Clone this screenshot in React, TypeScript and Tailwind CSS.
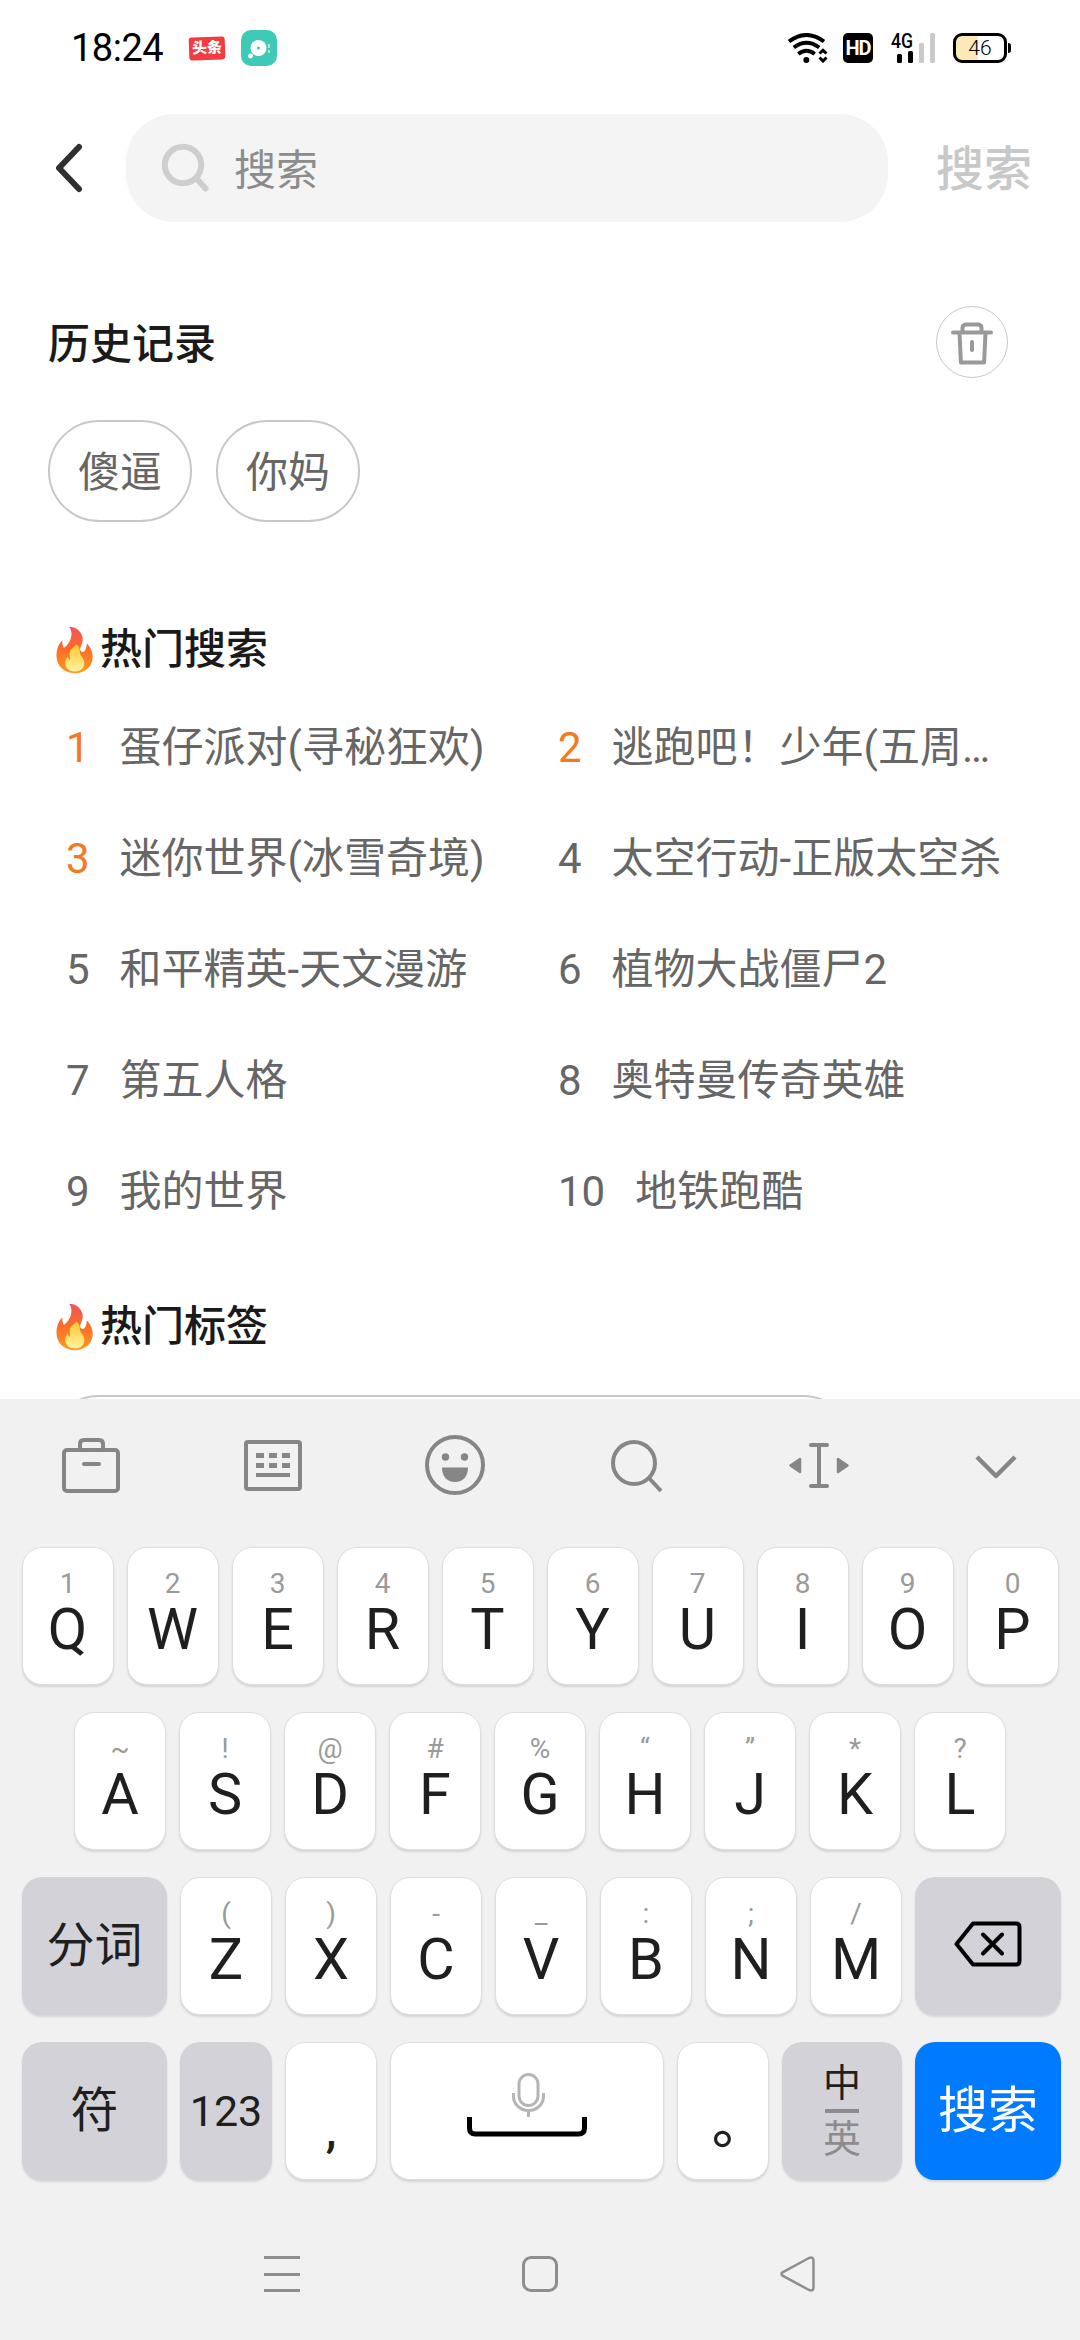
import type { ReactNode } from "react";
import clsx from "clsx";

const history = ["傻逼", "你妈"];

const hotSearches = [
  "蛋仔派对(寻秘狂欢)",
  "逃跑吧！少年(五周…",
  "迷你世界(冰雪奇境)",
  "太空行动-正版太空杀",
  "和平精英-天文漫游",
  "植物大战僵尸2",
  "第五人格",
  "奥特曼传奇英雄",
  "我的世界",
  "地铁跑酷",
];

const topRow = [
  ["1", "Q"],
  ["2", "W"],
  ["3", "E"],
  ["4", "R"],
  ["5", "T"],
  ["6", "Y"],
  ["7", "U"],
  ["8", "I"],
  ["9", "O"],
  ["0", "P"],
];

const middleRow = [
  ["~", "A"],
  ["!", "S"],
  ["@", "D"],
  ["#", "F"],
  ["%", "G"],
  ["“", "H"],
  ["”", "J"],
  ["*", "K"],
  ["?", "L"],
];

const bottomRow = [
  ["(", "Z"],
  [")", "X"],
  ["-", "C"],
  ["_", "V"],
  [":", "B"],
  [";", "N"],
  ["/", "M"],
];

const StatusBar = () => (
  <div className="flex h-24 items-center pl-[71px] pr-[69px] text-black">
    <span className="w-[118px] text-[38px] leading-[38px] tracking-[-0.5px]">18:24</span>
    <div className="flex h-9 w-9 items-center justify-center">
      <span className="flex h-[23px] w-9 -rotate-2 items-center justify-center rounded-[3px] bg-[#f43b3f] text-[15px] font-black leading-none text-white">
        头条
      </span>
    </div>
    <svg className="ml-4" width="36" height="36" viewBox="0 0 36 36">
      <rect width="36" height="36" rx="10" fill="#3fcab7" />
      <circle cx="17.5" cy="18" r="8" fill="#fff" />
      <circle cx="17.5" cy="18" r="1.6" fill="#3fcab7" />
      <circle cx="9.5" cy="26" r="2.4" fill="#fff" />
      <path d="M28 14v4M28 20v3" stroke="#a9e8df" strokeWidth="2" />
    </svg>

    <div className="ml-auto flex items-center">
      <svg width="40" height="30" viewBox="0 0 40 30" fill="none" stroke="#000">
        <path d="M1 8.5Q18.500 -4.500 36 8.500" strokeWidth="4" />
        <path d="M5.800 14.500Q18.500 5 31.200 14.500" strokeWidth="4" />
        <path d="M10.300 21Q18.500 14.500 26.700 21" strokeWidth="4" />
        <circle cx="18.300" cy="27" r="3" fill="#000" stroke="none" />
        <path d="M31.500 20.500 35 17.300l3.500 3.200M31.500 24.500l3.500 3.500 3.500-3.500" strokeWidth="3" />
      </svg>
      <span className="ml-[15px] flex h-[30px] w-[30px] items-center justify-center rounded-[5px] bg-black text-[20px] font-bold leading-none tracking-[-1px] text-white">
        HD
      </span>
      <svg className="mb-2 ml-[18px]" width="44" height="38" viewBox="0 -8 44 38">
        <text x="0" y="15" fontSize="20" fontWeight="500" textLength="22" lengthAdjust="spacingAndGlyphs">
          4G
        </text>
        <rect x="6" y="21" width="5" height="9" rx="1.500" />
        <rect x="17" y="18" width="5" height="12" rx="1.500" />
        <rect x="28" y="10" width="5" height="20" rx="1.500" fill="#cacaca" />
        <rect x="39" y="0" width="5" height="30" rx="1.500" fill="#cacaca" />
      </svg>
      <div className="ml-[18px] flex items-center gap-px">
        <div className="flex h-[30px] w-[54px] items-center justify-center rounded-[9px] border-[3px] border-black bg-linear-to-r from-[#fce9b6] from-45% to-white to-45% text-[21px] font-light leading-none">
          46
        </div>
        <div className="h-[10px] w-[3px] rounded-r-sm bg-black" />
      </div>
    </div>
  </div>
);

const SearchHeader = () => (
  <div className="flex h-36 items-center">
    <svg className="ml-[53px]" width="32" height="54" viewBox="0 0 32 54" fill="none" stroke="#303030" strokeWidth="6" strokeLinecap="round" strokeLinejoin="round">
      <path d="M26 6 6 27l20 21" />
    </svg>
    <div className="ml-[41px] flex h-[108px] w-[762px] items-center rounded-[48px] bg-[#f4f4f4] pl-[35px]">
      <svg width="50" height="50" viewBox="0 0 50 50" fill="none" stroke="#cecece" strokeWidth="6" strokeLinecap="round">
        <circle cx="22" cy="22" r="18.200" />
        <path d="m35.500 35.500 9 10" />
      </svg>
      <span className="ml-[23px] mt-[5px] text-[42px] leading-[60px] text-[#8c8c8c]">搜索</span>
    </div>
    <button className="ml-12 mt-[3px] text-[48px] font-medium leading-[60px] text-[#c8c8c8]">搜索</button>
  </div>
);

const TrashIcon = () => (
  <svg width="46" height="46" viewBox="0 0 46 46" fill="none" stroke="#999" strokeWidth="4" strokeLinecap="round" strokeLinejoin="round">
    <path d="M4 13.500h38M10.500 13.500l1.400 30h23.200l1.400-30" />
    <path d="M13.500 13V9q0-3 3-3.500h13q3 .5 3 3.500V13" />
    <path d="M23 23v8" />
  </svg>
);

const FireIcon = () => (
  <svg width="38" height="48" viewBox="0 0 38 48">
    <defs>
      <linearGradient id="flame" x1="0" y1="0" x2="0" y2="1">
        <stop offset="0" stopColor="#f2545b" />
        <stop offset=".45" stopColor="#fb6a2a" />
        <stop offset="1" stopColor="#ff9a1c" />
      </linearGradient>
      <linearGradient id="core" x1="0" y1="0" x2="0" y2="1">
        <stop offset="0" stopColor="#ffc62e" />
        <stop offset="1" stopColor="#fff3a0" />
      </linearGradient>
    </defs>
    <path
      d="M13 .8c7 0 12.500 4.500 13.600 11 .6 4-1.300 7.400-2.400 10.500-.5 2 .8 4 2.800 3.600 3-.6 3.500-5 3.800-8.400 3.400 3 5.900 8.500 5.900 13.500 0 9.500-7.700 16.200-18 16.200C8 47.200.5 40 .5 29.800.5 23.700 2.500 18 6.300 14.500c0 2.500.2 5.500 1.500 7.500 4.500-3 8.200-9 7.600-15.500C15.200 4 14 2 13 .8Z"
      fill="url(#flame)"
    />
    <path
      d="M20.200 18.500c3.800 1.500 3.300 5.700 3.800 8.500.8 3.500 4.300 5.500 4.300 10.200 0 5-4 8.300-9.400 8.300S9.300 42 9.300 37c0-3 1.200-5 2.300-7 .3 1.800 1 3.200 2.600 4 .3-3-1.200-4.500-.4-8 .8-3.400 4.400-4.500 6.400-7.500Z"
      fill="url(#core)"
    />
  </svg>
);

const HotTitle = ({ children }: { children: ReactNode }) => (
  <div className="flex h-[60px] items-center pl-[56px] text-[42px] font-medium leading-[60px] text-[#1a1a1a]">
    <FireIcon />
    <h2 className="ml-[6px]">{children}</h2>
  </div>
);

const Key = ({ hint, label }: { hint: string; label: string }) => (
  <div className="flex h-[138px] w-[92px] flex-col items-center rounded-[20px] border border-[#dedede] bg-white pt-[17px] shadow-[0_2px_2px_#d6d6d6]">
    <span className="h-[37px] text-[28px] leading-[37px] text-[#9a9a9a]">{hint}</span>
    <span className="text-[57.500px] leading-[56px] text-[#1f1f1f]">{label}</span>
  </div>
);

const ActionKey = ({ className, children }: { className?: string; children: ReactNode }) => (
  <div
    className={clsx(
      "flex h-[138px] flex-col items-center rounded-[20px] shadow-[0_2px_2px_#d6d6d6]",
      className
    )}
  >
    {children}
  </div>
);

const KeyboardToolbar = () => (
  <div className="grid h-[132px] grid-cols-[repeat(5,182px)_172px] items-center justify-items-center text-[#868686]">
    <svg width="60" height="60" viewBox="0 0 60 60" fill="none" stroke="currentColor" strokeWidth="4" strokeLinecap="round">
      <rect x="3" y="15" width="54" height="41" rx="3" />
      <path d="M19 15V9q0-4 4-4h15q4 0 4 4v6M23 29h15" />
    </svg>
    <svg width="60" height="60" viewBox="0 0 60 60" fill="none" stroke="currentColor" strokeWidth="4">
      <rect x="3" y="7" width="54" height="47" rx="2" />
      <path d="M13 20.500h34M13 30.500h34" strokeWidth="5" strokeDasharray="8 5" />
      <path d="M13 40h34" />
    </svg>
    <svg width="60" height="60" viewBox="0 0 60 60" fill="currentColor">
      <circle cx="30" cy="30" r="28" fill="none" stroke="currentColor" strokeWidth="4" />
      <circle cx="20.500" cy="22" r="3.700" />
      <circle cx="39.500" cy="22" r="3.700" />
      <path d="M17 32.500h26c0 9-5 14.500-13 14.500s-13-5.500-13-14.500Z" />
    </svg>
    <svg width="60" height="60" viewBox="0 0 60 60" fill="none" stroke="currentColor" strokeWidth="4">
      <circle cx="27" cy="28" r="21" />
      <path d="M42 43l12 13" />
    </svg>
    <svg width="60" height="60" viewBox="0 0 60 60" fill="currentColor" stroke="currentColor" strokeLinejoin="round" strokeLinecap="round">
      <path d="M30 10v40M22 10h16M22 51h16" strokeWidth="4" fill="none" />
      <path d="M1.500 30.500 11 24v13ZM58.500 30.500 49 24v13Z" strokeWidth="2.500" />
    </svg>
    <svg width="44" height="60" viewBox="0 0 44 60" fill="none" stroke="currentColor" strokeWidth="4.500">
      <path d="m3 22 19 19 19-19" strokeLinejoin="round" />
    </svg>
  </div>
);

const Keyboard = () => (
  <div className="h-[941px] bg-[#f1f1f1]">
    <KeyboardToolbar />
    <div className="flex flex-col gap-[27px] pt-4">
      <div className="flex justify-center gap-[13px]">
        {topRow.map(([hint, label]) => (
          <Key key={label} hint={hint} label={label} />
        ))}
      </div>
      <div className="flex justify-center gap-[13px]">
        {middleRow.map(([hint, label]) => (
          <Key key={label} hint={hint} label={label} />
        ))}
      </div>
      <div className="flex gap-[13px] pl-[22px]">
        <ActionKey className="w-[145px] justify-center bg-[#d3d2d8] text-[48px] leading-[60px] text-[#1f1f1f]">分词</ActionKey>
        {bottomRow.map(([hint, label]) => (
          <Key key={label} hint={hint} label={label} />
        ))}
        <ActionKey className="w-[146px] justify-center bg-[#d3d2d8]">
          <svg className="mb-1" width="68" height="46" viewBox="0 0 68 46" fill="none" stroke="#000" strokeWidth="4" strokeLinejoin="round" strokeLinecap="round">
            <path d="M19 2.500h43q3.500 0 3.500 3.500v34q0 3.500-3.500 3.500H19L2.500 23Z" />
            <path d="m29 13.500 19 19M48 13.500l-19 19" />
          </svg>
        </ActionKey>
      </div>
      <div className="flex gap-[13px] pl-[22px] text-[#1f1f1f]">
        <ActionKey className="w-[145px] justify-center bg-[#d3d2d8] text-[48px] leading-[60px]">符</ActionKey>
        <ActionKey className="w-[92px] justify-center bg-[#d3d2d8] text-[43px] leading-[60px]">123</ActionKey>
        <ActionKey className="w-[92px] border border-[#dedede] bg-white pt-[57px] text-[48px] font-medium leading-[60px]">,</ActionKey>
        <ActionKey className="w-[274px] border border-[#dedede] bg-white pt-[28px]">
          <svg width="122" height="66" viewBox="0 0 122 66" fill="none">
            <g stroke="#b5b5b5" strokeWidth="3">
              <rect x="53" y="3.500" width="19" height="31" rx="9.500" />
              <path d="M47.500 22v3.500a15 14 0 0 0 30 0V22M62.500 40v6" />
            </g>
            <path d="M3.500 46v11q0 6 6 6h103q6 0 6-6V46" stroke="#000" strokeWidth="5" />
          </svg>
        </ActionKey>
        <ActionKey className="w-[92px] border border-[#dedede] bg-white pt-[53px] pl-[32px] text-[54px] font-medium leading-[60px]">。</ActionKey>
        <ActionKey className="w-[120px] justify-center bg-[#d3d2d8] text-[38px] leading-[46px]">
          <span className="h-[46px]">中</span>
          <span className="my-[3px] h-1 w-[34px] bg-[#8c8c8f]" />
          <span className="h-[46px] text-[#8c8c8f]">英</span>
        </ActionKey>
        <ActionKey className="w-[146px] justify-center bg-[#007aff] text-[50px] leading-[60px] text-white">搜索</ActionKey>
      </div>
    </div>
    <NavigationBar />
  </div>
);

const NavigationBar = () => (
  <div className="mt-[76px] flex h-9 items-center pl-[264px]">
    <div className="flex h-9 w-9 flex-col justify-between">
      <span className="h-[3px] bg-[#8e8e8e]" />
      <span className="h-[3px] bg-[#8e8e8e]" />
      <span className="h-[3px] bg-[#8e8e8e]" />
    </div>
    <div className="ml-[222px] h-9 w-9 rounded-[9px] border-[3px] border-[#8e8e8e]" />
    <svg className="ml-[222px]" width="36" height="36" viewBox="0 0 36 36" fill="none" stroke="#8e8e8e" strokeWidth="2.500" strokeLinejoin="round">
      <path d="M2.500 16.300 29 2q4.500-1.500 4.500 2.500v27q0 4-4.500 2.500L2.500 19.700q-2-1.700 0-3.400Z" />
    </svg>
  </div>
);

export default function App() {
  return (
    <div className="flex h-[2340px] w-[1080px] flex-col overflow-hidden bg-white font-['Roboto','Noto_Sans_CJK_SC',sans-serif]">
      <StatusBar />
      <SearchHeader />

      <div className="h-[1159px] overflow-hidden">
        <div className="mt-[66px] flex h-[72px] items-center justify-between pl-12 pr-[72px]">
          <h2 className="mt-[5px] text-[42px] font-medium leading-[60px] text-[#1a1a1a]">历史记录</h2>
          <button className="flex h-[72px] w-[72px] items-center justify-center rounded-full border border-[#c8c8c8]">
            <TrashIcon />
          </button>
        </div>
        <div className="mt-[42px] flex gap-6 pl-12">
          {history.map((word) => (
            <span
              key={word}
              className="flex h-[102px] w-36 items-center justify-center rounded-full border-2 border-[#c8c8c8] pt-1 text-[42px] leading-[60px] text-[#666]"
            >
              {word}
            </span>
          ))}
        </div>

        <div className="mt-[98px]">
          <HotTitle>热门搜索</HotTitle>
        </div>
        <div className="mt-[12px] grid grid-cols-[492px_1fr] pl-[66px]">
          {hotSearches.map((name, index) => (
            <div key={name} className="flex h-[111px] items-center gap-[30px] text-[42px] leading-[60px] text-[#666]">
              <span className={clsx(index < 3 && "text-[#f47920]")}>{index + 1}</span>
              <span className="whitespace-nowrap">{name}</span>
            </div>
          ))}
        </div>

        <div className="mt-[50px]">
          <HotTitle>热门标签</HotTitle>
        </div>
        <div className="ml-12 mt-[38px] h-[102px] w-[806px] rounded-full border-2 border-[#c8c8c8]" />
      </div>

      <Keyboard />
    </div>
  );
}
